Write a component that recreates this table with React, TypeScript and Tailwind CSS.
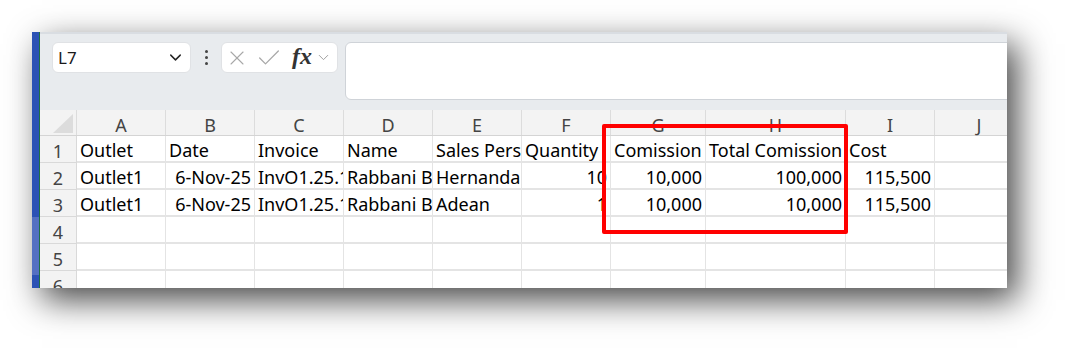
import React from "react";
import { ChevronDown, X, Check } from "lucide-react";

const cols = [
  { l: "A", w: 89 },
  { l: "B", w: 89 },
  { l: "C", w: 89 },
  { l: "D", w: 89 },
  { l: "E", w: 89 },
  { l: "F", w: 89 },
  { l: "G", w: 95 },
  { l: "H", w: 140 },
  { l: "I", w: 89 },
  { l: "J", w: 89 },
];

type Cell = { v: string; r?: boolean };

const rows: Cell[][] = [
  [
    { v: "Outlet" },
    { v: "Date" },
    { v: "Invoice" },
    { v: "Name" },
    { v: "Sales Person" },
    { v: "Quantity" },
    { v: "Comission" },
    { v: "Total Comission" },
    { v: "Cost" },
    { v: "" },
  ],
  [
    { v: "Outlet1" },
    { v: "6-Nov-25", r: true },
    { v: "InvO1.25.11.001" },
    { v: "Rabbani Bahri" },
    { v: "Hernanda" },
    { v: "10", r: true },
    { v: "10,000", r: true },
    { v: "100,000", r: true },
    { v: "115,500", r: true },
    { v: "" },
  ],
  [
    { v: "Outlet1" },
    { v: "6-Nov-25", r: true },
    { v: "InvO1.25.11.002" },
    { v: "Rabbani Bahri" },
    { v: "Adean" },
    { v: "1", r: true },
    { v: "10,000", r: true },
    { v: "10,000", r: true },
    { v: "115,500", r: true },
    { v: "" },
  ],
  cols.map(() => ({ v: "" })),
  cols.map(() => ({ v: "" })),
  cols.map(() => ({ v: "" })),
];

function FormulaBar() {
  return (
    <div className="h-[78px] shrink-0 bg-[#e8ebee] border-t-2 border-[#d9dde2] flex items-start pt-[8px] pl-[12px]">
      <div className="w-[139px] h-[31px] bg-white rounded-[6px] border border-[#e0e2e5] flex items-center justify-between pl-[5px] pr-[5px]">
        <span className="text-[17px] text-[#1a1a1a]">L7</span>
        <ChevronDown size={19} strokeWidth={1.8} className="text-[#222]" />
      </div>
      <div className="w-[30px] h-[31px] flex flex-col items-center justify-center gap-[3px]">
        <span className="w-[3px] h-[3px] rounded-full bg-[#444]" />
        <span className="w-[3px] h-[3px] rounded-full bg-[#444]" />
        <span className="w-[3px] h-[3px] rounded-full bg-[#444]" />
      </div>
      <div className="w-[117px] h-[31px] bg-white rounded-[6px] border border-[#e0e2e5] flex items-center pl-[3px]">
        <X size={24} strokeWidth={1.1} className="text-[#a8a8a8]" />
        <Check size={28} strokeWidth={1.1} className="text-[#a8a8a8] ml-[6px]" />
        <span className="ml-[9px] font-['Liberation_Serif',serif] italic font-bold text-[24px] leading-none text-[#333] -mt-[3px]">
          fx
        </span>
        <ChevronDown size={17} strokeWidth={1.3} className="text-[#999] ml-[3px]" />
      </div>
      <div className="flex-1 -mr-[20px] ml-[7px] h-[58px] bg-white rounded-[6px] border border-[#cfd3d8]" />
    </div>
  );
}

function Grid() {
  return (
    <div className="relative flex-1 bg-white">
      <div className="flex h-[26px] bg-[#f3f3f3] border-b border-[#d4d4d4]">
        <div className="w-[37px] shrink-0 relative border-r border-[#dcdcdc]">
          <svg width="20" height="19" className="absolute right-[3px] bottom-[2px]">
            <polygon points="20,0 20,19 0,19" fill="#dcdcdc" />
          </svg>
        </div>
        {cols.map((c) => (
          <div
            key={c.l}
            style={{ width: c.w }}
            className="shrink-0 border-r border-[#dcdcdc] flex items-center justify-center pt-[5px] text-[18px] text-[#444]"
          >
            {c.l}
          </div>
        ))}
      </div>
      {rows.map((r, i) => (
        <div key={i} className="flex h-[27px]">
          <div className="w-[37px] shrink-0 bg-[#f3f3f3] border-r border-b border-[#d9d9d9] flex items-center justify-center pt-[4px] text-[18px] text-[#444]">
            {i + 1}
          </div>
          {r.map((c, j) => (
            <div
              key={j}
              style={{ width: cols[j].w }}
              className={
                "shrink-0 overflow-hidden whitespace-nowrap border-r border-b-2 border-[#e4e4e4] flex items-center px-[3px] pt-[4px] text-[18px] text-black " +
                (c.r ? "justify-end" : "justify-start")
              }
            >
              {c.v}
            </div>
          ))}
        </div>
      ))}
      <div className="absolute left-[562px] top-[14px] w-[246px] h-[110px] border-[4px] border-[#ff0000] rounded-[2px]" />
    </div>
  );
}

export default function App() {
  return (
    <div className="w-[1072px] h-[353px] bg-white pt-[32px] pl-[32px] font-['Noto_Sans','Liberation_Sans',sans-serif]">
      <div className="w-[975px] h-[256px] flex overflow-hidden shadow-[10px_12px_32px_rgba(0,0,0,0.72)]">
        <div className="w-[7px] shrink-0 flex flex-col">
          <div className="h-[185px] bg-[#2c52b5]" />
          <div className="h-[58px] bg-[#5470c2]" />
          <div className="flex-1 bg-[#2c52b5]" />
        </div>
        <div className="w-[1px] shrink-0 bg-[#1e7145]" />
        <div className="flex-1 flex flex-col overflow-hidden">
          <FormulaBar />
          <Grid />
        </div>
      </div>
    </div>
  );
}
